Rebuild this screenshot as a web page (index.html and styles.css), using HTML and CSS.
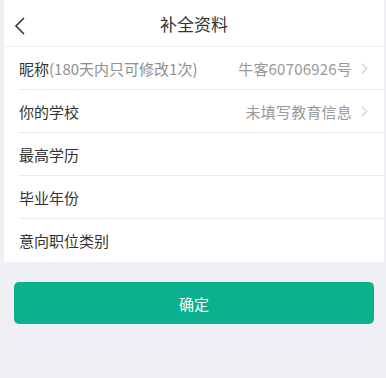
FILE: index.html
```html
<!DOCTYPE html>
<html lang="zh-CN">
<head>
	<meta charset="UTF-8">
	<title>补全资料</title>
	<meta name="viewport" content="width=device-width, initial-scale=1.0">
	<link rel="stylesheet" href="styles.css">
</head>
<body>
	<div class="page">
		<header class="header">
			<a class="back" href="#">
				<svg width="12" height="20" viewBox="0 0 12 20"><path d="M10 2 L2 10 L10 18" fill="none" stroke="#333" stroke-width="1.6"/></svg>
			</a>
			<h1 class="title">补全资料</h1>
		</header>
		<ul class="list">
			<li class="row">
				<span class="label">昵称<span class="hint">(180天内只可修改1次)</span></span>
				<span class="value">牛客60706926号<i class="arrow"></i></span>
			</li>
			<li class="row">
				<span class="label">你的学校</span>
				<span class="value">未填写教育信息<i class="arrow"></i></span>
			</li>
			<li class="row"><span class="label">最高学历</span></li>
			<li class="row"><span class="label">毕业年份</span></li>
			<li class="row"><span class="label">意向职位类别</span></li>
		</ul>
		<button class="btn" type="button">确定</button>
	</div>
</body>
</html>
```

FILE: styles.css
```css
html{
	box-sizing: border-box;
	font-family: "Noto Sans CJK SC", "Noto Sans", sans-serif;
	font-size: 16px;
}
*,
*:before,
*:after{
	box-sizing: inherit;
}

body{
	margin: 0;
	min-height: 100vh;
	background-color: #efeff4;
}

.page{
	margin: 0 2px 0 4px;
	min-height: 100vh;
	background-color: #efeff4;
}

.header{
	position: relative;
	height: 46px;
	display: flex;
	align-items: center;
	justify-content: center;
	background-color: #fff;
	margin-bottom: 1px;
}
.back{
	position: absolute;
	left: 10px;
	top: 16px;
	display: flex;
}
.title{
	margin: 0;
	font-size: 17px;
	font-weight: normal;
	color: #333;
}

.list{
	list-style: none;
	margin: 0;
	padding: 0 0 0 15px;
	background-color: #fff;
}
.row{
	height: 43px;
	display: flex;
	align-items: center;
	justify-content: space-between;
	padding-right: 16px;
	border-bottom: 1px solid #ebebee;
	font-size: 15px;
	color: #333;
}
.row:last-child{
	border-bottom: none;
}
.hint{
	color: #8e8e8e;
}
.value{
	display: flex;
	align-items: center;
	color: #999;
	letter-spacing: .2px;
}
.arrow{
	width: 7px;
	height: 7px;
	margin-left: 7px;
	margin-right: 2px;
	border-top: 1.3px solid #c8c8c8;
	border-right: 1.3px solid #c8c8c8;
	transform: rotate(45deg);
}

.btn{
	display: block;
	width: calc(100% - 20px);
	height: 42px;
	margin: 20px 10px 0;
	border: none;
	border-radius: 5px;
	background-color: #0bb08f;
	color: #fff;
	font-family: inherit;
	font-size: 15px;
}
```
